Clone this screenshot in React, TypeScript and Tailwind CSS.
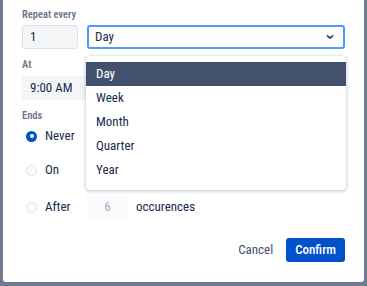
import React from "react";

function Radio({ checked }: { checked?: boolean }) {
  return checked ? (
    <span className="flex h-[11px] w-[11px] shrink-0 items-center justify-center rounded-full bg-[#0052cc]">
      <span className="h-[4px] w-[4px] rounded-full bg-white" />
    </span>
  ) : (
    <span className="h-[11px] w-[11px] shrink-0 rounded-full border-[1.5px] border-[#dfe1e6] bg-[#fafbfc]" />
  );
}

export default function App() {
  const items = ["Day", "Week", "Month", "Quarter", "Year"];
  return (
    <div
      className="h-[286px] w-[367px] overflow-hidden bg-[#707a91]"
      style={{ fontFamily: "Roboto, 'Noto Sans', sans-serif" }}
    >
      <div className="relative ml-[3px] flex h-[282px] w-[361px] flex-col rounded-b-[3px] bg-white px-[19px] pt-[7px] pb-[20px] text-[13px] font-stretch-[76%] text-[#172b4d]">
        <div className="text-[10.5px] font-semibold leading-[16px] text-[#6b778c]">Repeat every</div>
        <div className="mt-[2px] flex gap-[9px]">
          <div className="flex h-[24px] w-[56px] items-center rounded-[3px] border border-[#dfe1e6] bg-[#f4f5f7] px-[7px]">1</div>
          <div className="relative flex h-[24px] flex-1 items-center justify-between rounded-[3px] border-2 border-[#4c9aff] bg-white px-[6px]">
            <span>Day</span>
            <svg width="10" height="10" viewBox="0 0 10 10" className="mr-[2px]">
              <path d="M2.5 3.8 L5 6.2 L7.5 3.8" fill="none" stroke="#344563" strokeWidth="1.8" strokeLinecap="round" strokeLinejoin="round" />
            </svg>
            <div className="absolute left-[-3px] top-[29px] z-10 w-[260px] rounded-[4px] bg-white pt-[6px] pb-[8px] shadow-[0_1px_4px_rgba(9,30,66,0.25),0_0_1px_rgba(9,30,66,0.31)]">
              {items.map((it, i) => (
                <div
                  key={it}
                  className={
                    "flex h-[24px] items-center px-[10px] " +
                    (i === 0 ? "bg-[#42526e] text-white" : "text-[#172b4d]")
                  }
                >
                  {it}
                </div>
              ))}
            </div>
          </div>
        </div>
        <div className="mt-[8px] text-[10.5px] font-semibold leading-[16px] text-[#6b778c]">At</div>
        <div className="mt-[3px] flex h-[24px] w-[130px] items-center rounded-[3px] bg-[#f4f5f7] px-[8px]">9:00 AM</div>
        <div className="mt-[8px] text-[10.5px] font-semibold leading-[16px] text-[#6b778c]">Ends</div>
        <div className="mt-0 flex h-[24px] items-center gap-[8px] pl-[4px]">
          <Radio checked />
          <span>Never</span>
        </div>
        <div className="mt-[10px] flex h-[24px] items-center gap-[8px] pl-[4px]">
          <Radio />
          <span>On</span>
        </div>
        <div className="mt-[13px] flex h-[24px] items-center pl-[4px]">
          <Radio />
          <span className="ml-[8px] w-[42px]">After</span>
          <div className="flex h-[24px] w-[41px] items-center justify-center rounded-[3px] bg-[#fafbfc] text-[#a5adba]">6</div>
          <span className="ml-[8px]">occurences</span>
        </div>
        <div className="mt-auto flex items-center justify-end gap-[13px]">
          <span className="text-[#42526e]">Cancel</span>
          <button className="h-[24px] rounded-[3px] bg-[#0052cc] px-[9px] font-medium text-white">Confirm</button>
        </div>
      </div>
    </div>
  );
}
